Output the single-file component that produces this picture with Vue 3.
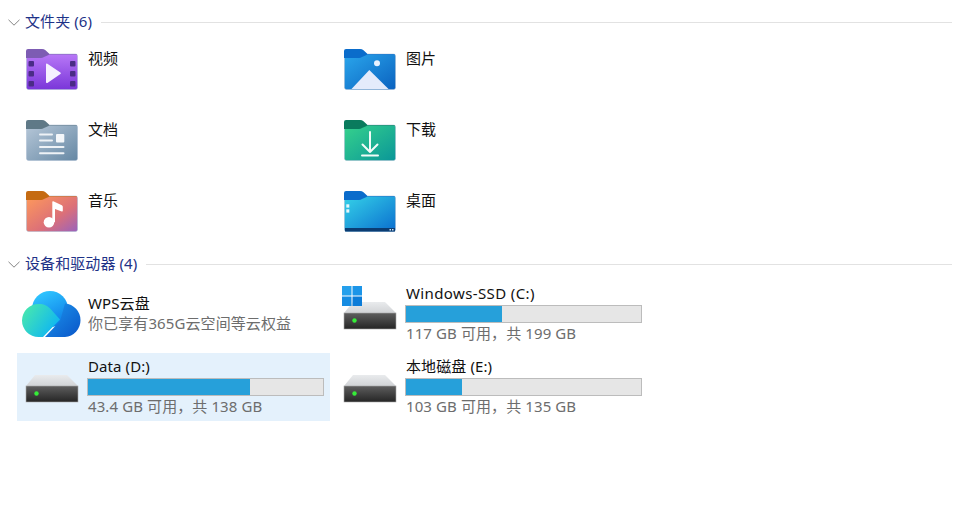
<script setup>
const folders = [
  { key: 'video', name: '视频', tab: '#7d5cb3', from: '#b878f7', to: '#7a36d9' },
  { key: 'pics', name: '图片', tab: '#0a6ccb', from: '#2aa6ec', to: '#0b62bf' },
  { key: 'docs', name: '文档', tab: '#5f7987', from: '#b6c7d8', to: '#6688a4' },
  { key: 'down', name: '下载', tab: '#0a7b5d', from: '#36d28c', to: '#0a9698' },
  { key: 'music', name: '音乐', tab: '#c56b12', from: '#ff9a5a', to: '#9a62bc' },
  { key: 'desk', name: '桌面', tab: '#0b6ccb', from: '#35d2e8', to: '#0a6ecf' }
]

const drives = [
  { key: 'c', name: 'Windows-SSD (C:)', used: 41, free: '117 GB 可用，共 199 GB', system: true },
  { key: 'd', name: 'Data (D:)', used: 69, free: '43.4 GB 可用，共 138 GB', selected: true },
  { key: 'e', name: '本地磁盘 (E:)', used: 24, free: '103 GB 可用，共 135 GB' }
]
</script>

<template>
  <div class="page">
    <div class="head">
      <svg class="chev" width="12" height="7" viewBox="0 0 12 7"><path d="M.5.8 6 6.2 11.5.8" fill="none" stroke="#858585"/></svg>
      <span class="title">文件夹 (6)</span>
      <div class="rule"></div>
    </div>
    <div class="grid folders">
      <div v-for="f in folders" :key="f.key" class="tile folder">
        <svg class="icon" width="71" height="67" viewBox="0 0 71 67">
          <defs>
            <linearGradient :id="'body-' + f.key" x1="0" y1="0" x2="1" :y2="f.key === 'video' ? 0 : 1" :gradientTransform="f.key === 'video' ? 'rotate(90 .5 .5)' : ''">
              <stop offset="0" :stop-color="f.from"/>
              <stop v-if="f.key === 'music'" offset=".6" stop-color="#dc7078"/>
              <stop offset="1" :stop-color="f.to"/>
            </linearGradient>
          </defs>
          <g transform="translate(9 11)">
            <rect x=".5" y="5" width="51" height="35.500" rx="2" :fill="`url(#body-${f.key})`" stroke="#9fb4cc" stroke-opacity=".45"/>
            <rect x="23" y="5" width="28" height="1" :fill="f.tab" opacity=".45"/>
            <path d="M0 9V2a2 2 0 0 1 2-2h14q2 0 3.500 1.200L23 4.500q1 .8-.4 1.400L18 8q-1.500 1-3 1Z" :fill="f.tab"/>

            <template v-if="f.key === 'video'">
              <g fill="#4a2c86">
                <rect x="2.500" y="12" width="5.500" height="5.500" rx="1"/>
                <rect x="2.500" y="22" width="5.500" height="5.500" rx="1"/>
                <rect x="2.500" y="32" width="5.500" height="5.500" rx="1"/>
                <rect x="44" y="12" width="5.500" height="5.500" rx="1"/>
                <rect x="44" y="22" width="5.500" height="5.500" rx="1"/>
                <rect x="44" y="32" width="5.500" height="5.500" rx="1"/>
              </g>
              <path d="M20 15.500q0-1.500 1.400-.8l13 8.700q1 .8 0 1.500l-13 9q-1.400.7-1.400-.9Z" fill="#f6f0ff"/>
            </template>

            <template v-if="f.key === 'pics'">
              <circle cx="33" cy="14.300" r="3" fill="#e8f2ff"/>
              <path d="M7.500 40 25.300 21 44.500 40Z" fill="#e4ebfb"/>
            </template>

            <template v-if="f.key === 'docs'">
              <rect x="30" y="14" width="8.300" height="8.500" rx="1" fill="#f4f7fa"/>
              <g stroke="#eef2f6" stroke-width="2" stroke-linecap="round">
                <path d="M14 14.500H26M14 20.500H26M14 27H37.500M14 33.300H37.500"/>
              </g>
            </template>

            <template v-if="f.key === 'down'">
              <g fill="none" stroke="#f2fbf8" stroke-width="2" stroke-linecap="round" stroke-linejoin="round">
                <path d="M26 12V32M18.500 24.500 26 32l7.500-7.500"/>
                <path d="M18 35.500H34"/>
              </g>
            </template>

            <template v-if="f.key === 'music'">
              <circle cx="23" cy="31.300" r="5.300" fill="#fff"/>
              <path d="M26.300 31V11q0-1 1-.7l8.500 4q1 .5 1 1.500v4q0 1-1 .7l-6.800-2.500V31Z" fill="#fff"/>
            </template>

            <template v-if="f.key === 'desk'">
              <rect x="1" y="37" width="50" height="3.500" fill="#0b3c72"/>
              <rect x="2.300" y="13.300" width="3" height="3.300" fill="#e6f8fc"/>
              <rect x="2.300" y="18.300" width="3" height="3.300" fill="#e6f8fc"/>
              <rect x="45.500" y="38" width="1.500" height="1.500" fill="#cfe6f5"/>
              <rect x="48" y="38" width="1.500" height="1.500" fill="#cfe6f5"/>
            </template>
          </g>
        </svg>
        <div class="fname">{{ f.name }}</div>
      </div>
    </div>

    <div class="head second">
      <svg class="chev" width="12" height="7" viewBox="0 0 12 7"><path d="M.5.8 6 6.2 11.5.8" fill="none" stroke="#858585"/></svg>
      <span class="title">设备和驱动器 (4)</span>
      <div class="rule"></div>
    </div>
    <div class="grid drives">
      <div class="tile drive wps">
        <svg class="icon" width="71" height="68" viewBox="0 0 71 68">
          <defs>
            <linearGradient id="cl-top" x1=".3" y1="0" x2=".8" y2="1">
              <stop offset="0" stop-color="#2fc6ff"/>
              <stop offset="1" stop-color="#0a78e6"/>
            </linearGradient>
            <linearGradient id="cl-right" x1="0" y1="0" x2="1" y2="1">
              <stop offset="0" stop-color="#1d98ee"/>
              <stop offset="1" stop-color="#0a55c8"/>
            </linearGradient>
            <linearGradient id="cl-left" x1="0" y1=".2" x2="1" y2=".8">
              <stop offset="0" stop-color="#48e8ae"/>
              <stop offset="1" stop-color="#08b0fa"/>
            </linearGradient>
          </defs>
          <circle cx="33" cy="29" r="18" fill="url(#cl-top)"/>
          <path d="M48 23.500a16.800 16.800 0 0 1 0 33.500H28L43 41Z" fill="url(#cl-right)"/>
          <path d="M21.500 24c6 0 9.500 2 12.500 5.500L43 39.500 26 57h-4.500a16.500 16.500 0 0 1 0-33Z" fill="url(#cl-left)"/>
        </svg>
        <div class="info">
          <div class="dname">WPS云盘</div>
          <div class="sub">你已享有365G云空间等云权益</div>
        </div>
      </div>

      <div v-for="d in drives" :key="d.key" class="tile drive" :class="{ selected: d.selected }">
        <svg class="icon" width="71" height="68" viewBox="0 0 71 68">
          <defs>
            <linearGradient :id="'top-' + d.key" x1="0" y1="0" x2="0" y2="1">
              <stop offset="0" stop-color="#e9ebed"/>
              <stop offset="1" stop-color="#cfd1d4"/>
            </linearGradient>
            <linearGradient :id="'case-' + d.key" x1="0" y1="0" x2="0" y2="1">
              <stop offset="0" stop-color="#5e5e5e"/>
              <stop offset="1" stop-color="#252525"/>
            </linearGradient>
          </defs>
          <path d="M18 22H50L61 33V34H9V33Z" :fill="`url(#top-${d.key})`"/>
          <rect x="9" y="33" width="52" height="16" :fill="`url(#case-${d.key})`" stroke="#a8a8a8" stroke-width=".6"/>
          <circle cx="19.500" cy="40.500" r="2.200" fill="#35ec38"/>
          <g v-if="d.system">
            <rect x="7" y="6" width="9.500" height="9.500" fill="#25a0ec"/>
            <rect x="17.500" y="6" width="9.500" height="9.500" fill="#1c95e8"/>
            <rect x="7" y="16.500" width="9.500" height="9.500" fill="#168ce2"/>
            <rect x="17.500" y="16.500" width="9.500" height="9.500" fill="#0c7cd8"/>
          </g>
        </svg>
        <div class="info bar-info">
          <div class="dname" :class="{ wide: d.system }">{{ d.name }}</div>
          <div class="bar"><div class="fill" :style="{ width: d.used + '%' }"></div></div>
          <div class="sub">{{ d.free }}</div>
        </div>
      </div>
    </div>
  </div>
</template>

<style scoped>
.page {
  height: 514px;
  padding-top: 12px;
  box-sizing: border-box;
  font-family: "Noto Sans", "Noto Sans CJK SC", sans-serif;
  font-size: 15px;
  line-height: 20px;
  color: #111;
  background: #fff;
}

.head {
  display: flex;
  align-items: center;
  height: 20px;
  margin-bottom: 6px;
  padding: 0 8px;
}

.second {
  margin-top: 7px;
}

.chev {
  margin-right: 5px;
  flex: none;
}

.title {
  color: #1e3287;
  white-space: nowrap;
  letter-spacing: .08px;
  margin-bottom: 2px;
}

.rule {
  flex: 1;
  height: 1px;
  margin-left: 9px;
  background: #e2e2e2;
}

.grid {
  display: grid;
  grid-template-columns: 313px 313px;
  column-gap: 5px;
  padding-left: 17px;
}

.folders {
  row-gap: 4px;
}

.drives {
  row-gap: 5px;
}

.tile {
  display: flex;
}

.folder {
  height: 67px;
}

.drive {
  height: 68px;
}

.selected {
  background: #e4f1fc;
}

.icon {
  flex: none;
  display: block;
}

.fname {
  padding-top: 10px;
}

.info {
  padding-top: 13px;
}

.bar-info {
  padding-top: 3px;
}

.dname,
.sub {
  white-space: nowrap;
  letter-spacing: .1px;
}

.wide {
  letter-spacing: .38px;
}

.sub {
  color: #6d6d6d;
}

.bar {
  width: 237px;
  height: 18px;
  margin: 2px 0 0 -1px;
  box-sizing: border-box;
  border: 1px solid #bcbcbc;
  background: #e6e6e6;
}

.fill {
  height: 100%;
  background: #26a0da;
}
</style>
